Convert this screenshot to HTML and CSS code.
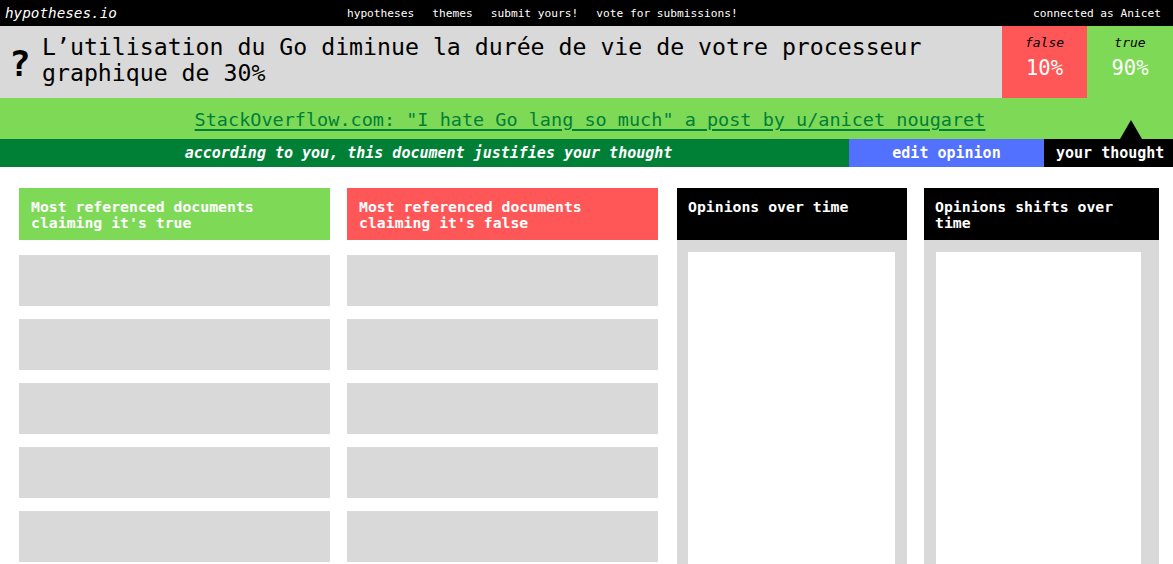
FILE: index.html
```html
<!DOCTYPE html>
<html lang="fr">
<head>
<meta charset="utf-8">
<title>hypotheses.io</title>
<link rel="stylesheet" href="styles.css">
</head>
<body>
<nav class="topbar">
  <a class="logo" href="#">hypotheses.io</a>
  <div class="links">
    <a href="#">hypotheses</a>
    <a href="#">themes</a>
    <a href="#">submit yours!</a>
    <a href="#">vote for submissions!</a>
  </div>
  <div class="user">connected as Anicet</div>
</nav>

<header class="hypothesis">
  <div class="qmark">?</div>
  <h1 class="title">L’utilisation du Go diminue la durée de vie de votre processeur graphique de 30%</h1>
  <div class="score score-false">
    <span class="label">false</span>
    <span class="pct">10%</span>
  </div>
  <div class="score score-true">
    <span class="label">true</span>
    <span class="pct">90%</span>
  </div>
</header>

<section class="document">
  <a class="doc-link" href="#">StackOverflow.com: "I hate Go lang so much" a post by u/anicet_nougaret</a>
  <span class="pointer"></span>
</section>

<section class="opinion-bar">
  <div class="verdict">according to you, this document justifies your thought</div>
  <button class="edit">edit opinion</button>
  <div class="yours">your thought</div>
</section>

<main class="panels">
  <section class="col">
    <h2 class="col-head head-true">Most referenced documents claiming it's true</h2>
    <div class="doc-item"></div>
    <div class="doc-item"></div>
    <div class="doc-item"></div>
    <div class="doc-item"></div>
    <div class="doc-item"></div>
  </section>
  <section class="col">
    <h2 class="col-head head-false">Most referenced documents claiming it's false</h2>
    <div class="doc-item"></div>
    <div class="doc-item"></div>
    <div class="doc-item"></div>
    <div class="doc-item"></div>
    <div class="doc-item"></div>
  </section>
  <section class="col chart chart-a">
    <h2 class="col-head head-dark">Opinions over time</h2>
    <div class="chart-body"><div class="chart-canvas"></div></div>
  </section>
  <section class="col chart chart-b">
    <h2 class="col-head head-dark">Opinions shifts over time</h2>
    <div class="chart-body"><div class="chart-canvas"></div></div>
  </section>
</main>
</body>
</html>
```

FILE: styles.css
```css
* { box-sizing: border-box; }
html, body { margin: 0; padding: 0; }
body {
  width: 1173px;
  height: 564px;
  overflow: hidden;
  background: #ffffff;
  font-family: "DejaVu Sans Mono", "Liberation Mono", monospace;
  color: #000;
}

/* top nav */
.topbar {
  display: flex;
  align-items: center;
  height: 26px;
  background: #000;
  color: #fff;
  padding: 0 12px 0 5px;
}
.logo {
  color: #fff;
  text-decoration: none;
  font-style: italic;
  font-size: 14.3px;
}
.links {
  display: flex;
  gap: 18px;
  margin-left: 230px;
}
.links a, .user {
  color: #fff;
  text-decoration: none;
  font-size: 11.2px;
}
.user { margin-left: auto; }

/* hypothesis header */
.hypothesis {
  display: flex;
  background: #d9d9d9;
  height: 72px;
}
.qmark {
  width: 42px;
  padding-left: 9px;
  font-size: 36px;
  font-weight: bold;
  line-height: 72px;
  padding-top: 2px;
}
.title {
  flex: 1;
  margin: 0;
  padding-top: 8px;
  font-size: 23.2px;
  font-weight: normal;
  line-height: 26px;
}
.score {
  display: flex;
  flex-direction: column;
  align-items: center;
  padding-top: 9px;
}
.score-false { width: 85px; background: #ff5757; }
.score-true { width: 86px; background: #7ed957; }
.score .label {
  font-style: italic;
  font-size: 13px;
  line-height: 16px;
}
.score .pct {
  color: #fff;
  font-size: 20.5px;
  line-height: 34px;
}

/* document bar */
.document {
  position: relative;
  display: flex;
  justify-content: center;
  align-items: center;
  height: 41px;
  background: #7ed957;
  padding-left: 7px;
}
.doc-link {
  color: #008037;
  font-size: 18.5px;
  text-decoration: underline;
  text-decoration-thickness: 2px;
  text-underline-offset: 3px;
  margin-top: 2px;
}
.pointer {
  position: absolute;
  right: 31px;
  bottom: 0;
  width: 0;
  height: 0;
  border-left: 11px solid transparent;
  border-right: 11px solid transparent;
  border-bottom: 19px solid #000;
}

/* opinion bar */
.opinion-bar {
  display: flex;
  height: 28px;
  color: #fff;
  font-weight: bold;
  font-size: 15px;
}
.verdict {
  flex: 1;
  display: flex;
  align-items: center;
  justify-content: center;
  background: #008037;
  font-style: italic;
  padding-left: 8px;
}
.edit {
  width: 195px;
  border: 0;
  background: #5271ff;
  color: #fff;
  font: inherit;
  padding: 0;
}
.yours {
  width: 129px;
  display: flex;
  align-items: center;
  padding-left: 12px;
  background: #000;
}

/* panels */
.panels {
  display: grid;
  grid-template-columns: 311px 311px 232px 235px;
  column-gap: 17px;
  align-items: start;
  padding: 21px 0 0 19px;
}
.col {
  display: flex;
  flex-direction: column;
  gap: 13px;
}
.col-head {
  margin: 0 0 2px;
  height: 52px;
  padding: 11px 12px 0 12px;
  color: #fff;
  font-size: 14.8px;
  font-weight: bold;
  line-height: 16px;
}
.head-true { background: #7ed957; }
.head-false { background: #ff5757; }
.head-dark { background: #000; padding-left: 11px; }
.doc-item {
  height: 51px;
  background: #d9d9d9;
}
.chart { gap: 0; }
.chart-a { margin-left: 2px; }
.chart .col-head { margin-bottom: 0; }
.chart-body {
  background: #d9d9d9;
  padding: 12px 12px 0 11px;
  height: 400px;
}
.chart-b .chart-body { padding: 12px 18px 0 12px; }
.chart-canvas {
  background: #fff;
  height: 100%;
}
```
